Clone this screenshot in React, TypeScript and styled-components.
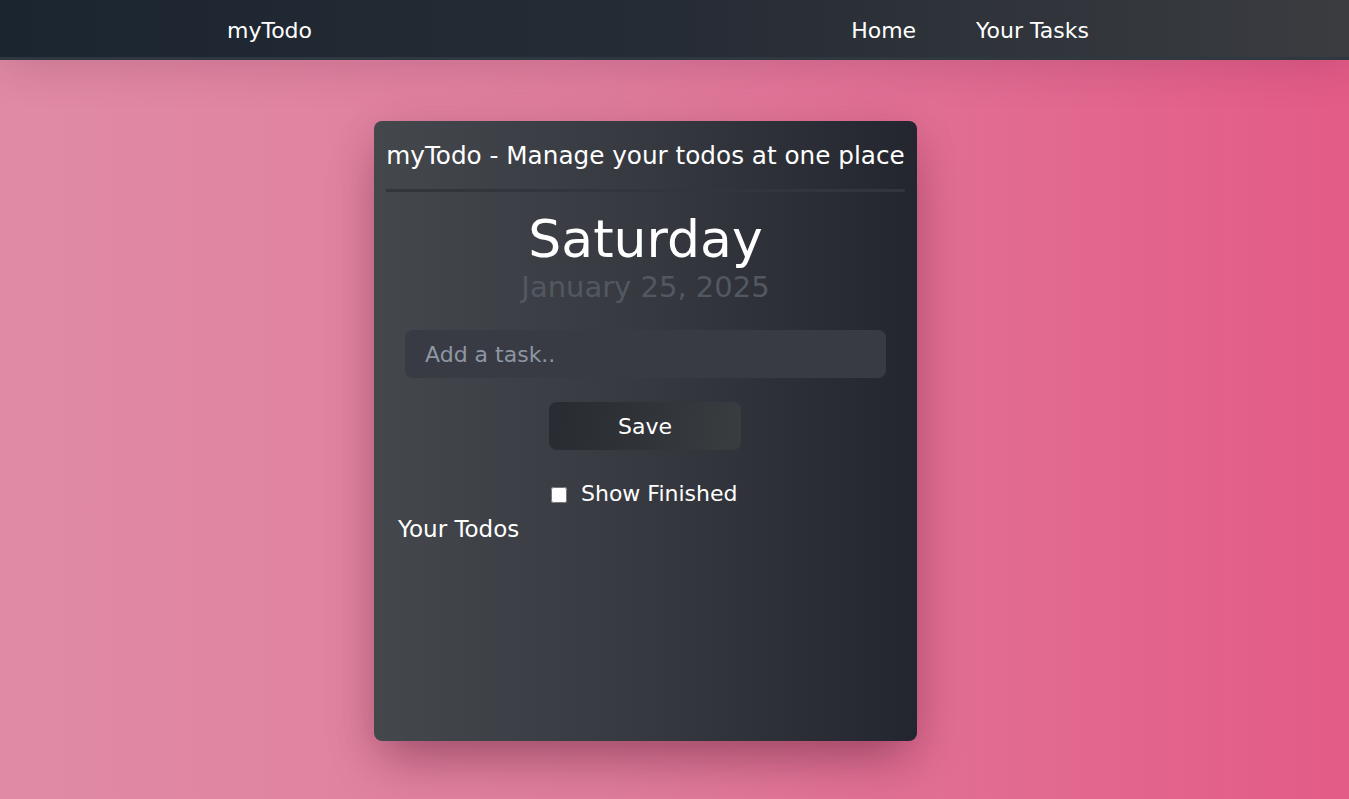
import React from "react";
import styled, { createGlobalStyle } from "styled-components";

const Global = createGlobalStyle`
  html, body { margin: 0; padding: 0; }
  body {
    font-family: "Comic Sans MS", "DejaVu Sans", sans-serif;
    min-height: 799px;
    background: linear-gradient(90deg, #e08ba5 0%, #e07d9d 45%, #e35b87 100%);
  }
`;

const Page = styled.div`
  min-height: 799px;
  display: flex;
  flex-direction: column;
`;

const Nav = styled.nav`
  height: 53px;
  padding: 4px 260px 0 227px;
  display: flex;
  align-items: center;
  justify-content: space-between;
  background: linear-gradient(90deg, #1b2530 0%, #262c35 50%, #3a3c40 100%);
  border-bottom: 3px solid #2f3740;
  box-shadow: 0 8px 40px rgba(90, 30, 60, 0.18);
  color: #fff;
  position: relative;
  z-index: 1;
`;

const Brand = styled.div`
  font-size: 22px;
`;

const NavLinks = styled.ul`
  display: flex;
  gap: 60px;
  list-style: none;
  margin: 0;
  padding: 0;
  font-size: 22px;
`;

const NavLink = styled.li`
  cursor: pointer;
`;

const Main = styled.main`
  display: flex;
  justify-content: center;
  padding-top: 61px;
  padding-right: 58px;
`;

const Card = styled.section`
  width: 543px;
  height: 620px;
  box-sizing: border-box;
  padding: 12px 12px;
  border-radius: 8px;
  background: linear-gradient(90deg, #44474c 0%, #363940 50%, #23262e 100%);
  box-shadow: 0 25px 50px -12px rgba(60, 10, 30, 0.35), 0 10px 40px rgba(80, 20, 40, 0.15);
  color: #fff;
  display: flex;
  flex-direction: column;
`;

const Title = styled.h1`
  margin: 8px 0 0;
  font-size: 24.7px;
  font-weight: 400;
  text-align: center;
  white-space: nowrap;
`;

const Rule = styled.hr`
  margin: 19px 0 0;
  border: none;
  height: 3px;
  background: #31363c;
`;

const Day = styled.div`
  margin-top: 17px;
  text-align: center;
  font-size: 52px;
  line-height: 60px;
`;

const DateText = styled.div`
  margin-top: 1px;
  text-align: center;
  font-size: 29px;
  line-height: 34px;
  color: #525862;
`;

const Input = styled.input`
  margin: 26px 19px 0 19px;
  height: 48px;
  box-sizing: border-box;
  border: none;
  outline: none;
  border-radius: 8px;
  background: #383b43;
  padding: 0 20px;
  color: #fff;
  font-family: inherit;
  font-size: 22px;
  &::placeholder { color: #8f96a3; }
`;

const SaveButton = styled.button`
  align-self: center;
  margin-top: 24px;
  width: 192px;
  height: 48px;
  border: none;
  border-radius: 8px;
  background: linear-gradient(100deg, #282b31 0%, #2f3237 45%, #3a3d40 100%);
  color: #fff;
  font-family: inherit;
  font-size: 22px;
  font-weight: 400;
  margin-right: 1px;
`;

const CheckRow = styled.label`
  align-self: center;
  margin-top: 31px;
  margin-right: 1px;
  display: flex;
  align-items: center;
  gap: 14px;
  font-size: 22px;
  width: 192px;
`;

const Box = styled.input`
  width: 16px;
  height: 16px;
  margin: 2px 0 0 2px;
`;

const Heading = styled.h2`
  margin: 10px 0 0 12px;
  font-size: 23px;
  font-weight: 400;
`;

export default function App() {
  return (
    <Page>
      <Global />
      <Nav>
        <Brand>myTodo</Brand>
        <NavLinks>
          <NavLink>Home</NavLink>
          <NavLink>Your Tasks</NavLink>
        </NavLinks>
      </Nav>
      <Main>
        <Card>
          <Title>myTodo - Manage your todos at one place</Title>
          <Rule />
          <Day>Saturday</Day>
          <DateText>January 25, 2025</DateText>
          <Input placeholder="Add a task.." />
          <SaveButton>Save</SaveButton>
          <CheckRow>
            <Box type="checkbox" />
            Show Finished
          </CheckRow>
          <Heading>Your Todos</Heading>
        </Card>
      </Main>
    </Page>
  );
}
